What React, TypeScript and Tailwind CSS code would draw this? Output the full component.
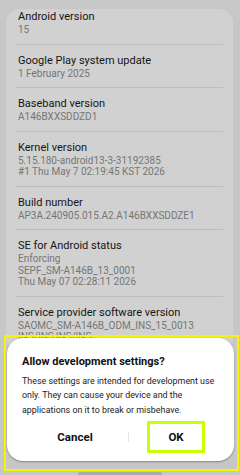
const rows: { title: string; lines: string[] }[] = [
  { title: "Android version", lines: ["15"] },
  { title: "Google Play system update", lines: ["1 February 2025"] },
  { title: "Baseband version", lines: ["A146BXXSDDZD1"] },
  {
    title: "Kernel version",
    lines: ["5.15.180-android13-3-31192385", "#1 Thu May 7 02:19:45 KST 2026"],
  },
  { title: "Build number", lines: ["AP3A.240905.015.A2.A146BXXSDDZE1"] },
  {
    title: "SE for Android status",
    lines: ["Enforcing", "SEPF_SM-A146B_13_0001", "Thu May 07 02:28:11 2026"],
  },
  {
    title: "Service provider software version",
    lines: ["SAOMC_SM-A146B_ODM_INS_15_0013", "INS/INS,INS/INS"],
  },
];

const InfoRow = ({
  title,
  lines,
  first,
  last,
}: {
  title: string;
  lines: string[];
  first: boolean;
  last: boolean;
}) => {
  return (
    <div
      className={
        (first ? "-mt-[1px] pt-0" : "pt-[8px]") +
        " px-[2px] pb-[8px]" +
        (last ? "" : " border-b border-[#bdbdbd]")
      }
    >
      <div className="text-[11px] leading-[15px] text-[#151515]">{title}</div>
      {lines.map((l) => (
        <div key={l} className="text-[10px] leading-[11.5px] text-[#767676]">
          {l}
        </div>
      ))}
    </div>
  );
};

const App = () => {
  return (
    <div className="relative w-[240px] h-[475px] overflow-hidden bg-[#c7c7c7] font-['Roboto',sans-serif]">
      <div className="pl-[6px] pr-[7px] pt-[10px]">
        <div className="rounded-[14px] bg-[#d1d1d1] px-[10px]">
          {rows.map((r, i) => (
            <InfoRow
              key={r.title}
              title={r.title}
              lines={r.lines}
              first={i === 0}
              last={i === rows.length - 1}
            />
          ))}
        </div>
      </div>

      {/* highlight frame round the dialog */}
      <div className="absolute left-[4px] right-[1px] top-[335px] h-[136px] border-2 border-[#f5f500]" />

      <div className="absolute left-[7px] right-[6px] top-[338px] h-[123px] rounded-[16px] bg-white shadow-[0_1px_2px_rgba(0,0,0,0.35)] pl-[15px] pr-[6px] pt-[17px]">
        <div className="text-[11px] leading-[14px] font-bold text-[#111]">
          Allow development settings?
        </div>
        <p className="mt-[5px] text-[8.9px] leading-[14.4px] text-[#222] whitespace-nowrap">
          These settings are intended for development use
          <br />
          only. They can cause your device and the
          <br />
          applications on it to break or misbehave.
        </p>
        <div className="mt-[4px] flex items-center">
          <button className="w-[106px] h-[32px] text-[11.5px] font-bold text-[#111]">
            Cancel
          </button>
          <div className="w-px h-[10px] bg-[#e4e4e4]" />
          <button className="ml-[18px] w-[58px] h-[32px] border-[3px] border-[#c6ff00] text-[11.5px] font-bold text-[#111]">
            OK
          </button>
        </div>
      </div>

      <div className="absolute left-[78px] w-[84px] top-[472px] h-[4px] rounded-full bg-[#ababab]" />
    </div>
  );
};

export default App;
